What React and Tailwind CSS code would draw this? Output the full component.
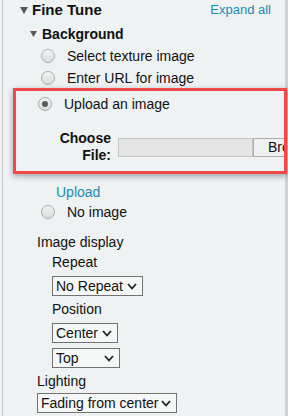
import React from "react";

function Radio({ checked }) {
  return (
    <span className="w-[14px] h-[14px] rounded-full border border-[#acacac] bg-linear-to-b from-[#f3f3f3] to-[#dadada] flex items-center justify-center shrink-0">
      {checked && <span className="w-[6px] h-[6px] rounded-full bg-[#5a5a5a]" />}
    </span>
  );
}

function Chevron() {
  return (
    <svg width="10" height="7" viewBox="0 0 10 7" className="shrink-0">
      <polyline points="1,1 5,5.5 9,1" fill="none" stroke="#222" strokeWidth="1.8" />
    </svg>
  );
}

function Select({ label, className }) {
  return (
    <div className={"h-[20px] border border-[#737373] bg-[#f6f8f8] flex items-center justify-between pl-[3px] pr-[5px] text-[14px] text-[#111] " + className}>
      <span>{label}</span>
      <Chevron />
    </div>
  );
}

function Triangle({ big }) {
  return big ? (
    <svg width="8" height="7" viewBox="0 0 8 7"><polygon points="0,0 8,0 4,7" fill="#595959" /></svg>
  ) : (
    <svg width="7" height="6" viewBox="0 0 7 6"><polygon points="0,0 7,0 3.5,6" fill="#595959" /></svg>
  );
}

function RadioRow({ label, checked, className = "" }) {
  return (
    <div className={"h-[20px] flex items-center " + className}>
      <Radio checked={checked} />
      <span className="ml-[12px] text-[14px] text-[#111]">{label}</span>
    </div>
  );
}

export default function App() {
  return (
    <div className="w-[288px] h-[416px] overflow-hidden bg-[#eef2f3] pl-[2px] font-['Liberation_Sans',Arial,sans-serif]">
      <div className="h-full border-l border-[#c4c8c9] border-r-[3px] border-r-[#cdd1d2]">
        {/* header */}
        <div className="h-[20px] flex items-center pl-[17px] pr-[14px]">
          <Triangle big />
          <span className="ml-[4px] text-[15px] font-bold text-[#111]">Fine Tune</span>
          <span className="ml-auto text-[13px] text-[#1b8ab3]">Expand all</span>
        </div>

        <div className="mt-[2px] h-[24px] flex items-center pl-[27px]">
          <Triangle />
          <span className="ml-[5px] text-[14px] font-bold text-[#111]">Background</span>
        </div>

        <div className="pl-[38px]">
          <RadioRow label="Select texture image" />
          <RadioRow label="Enter URL for image" className="mt-[2px]" />
        </div>

        {/* highlighted upload block */}
        <div className="relative z-10 ml-[10px] w-[274px] h-[86px] border-[3px] border-[#f14848] shadow-[0_2px_6px_rgba(0,0,0,0.35)] overflow-hidden pt-[3px]">
          <RadioRow label="Upload an image" checked className="pl-[22px]" />
          <div className="mt-[16px] flex items-center">
            <div className="w-[102px] shrink-0 pr-[7px] text-right text-[14px] leading-[17px] font-bold text-[#111]">
              Choose
              <br />
              File:
            </div>
            <div className="w-[135px] h-[19px] bg-[#e4e4e4] border border-[#c6c6c6] shrink-0" />
            <div className="h-[19px] w-[80px] shrink-0 bg-[#f0f0f0] border border-[#adadad] pl-[14px] text-[14px] leading-[17px] text-[#111] whitespace-nowrap">
              Browse...
            </div>
          </div>
        </div>

        <div className="mt-[8px] h-[20px] flex items-center pl-[53px] text-[14px] text-[#1b8ab3]">Upload</div>
        <div className="pl-[38px]">
          <RadioRow label="No image" />
        </div>

        <div className="mt-[10px] h-[20px] flex items-center pl-[34px] text-[14px] text-[#111]">Image display</div>
        <div className="h-[20px] flex items-center pl-[49px] text-[14px] text-[#111]">Repeat</div>
        <div className="pl-[49px] mt-[4px]">
          <Select label="No Repeat" className="w-[91px]" />
        </div>
        <div className="mt-[3px] h-[20px] flex items-center pl-[49px] text-[14px] text-[#111]">Position</div>
        <div className="pl-[49px] mt-[4px]">
          <Select label="Center" className="w-[66px]" />
        </div>
        <div className="pl-[49px] mt-[5px]">
          <Select label="Top" className="w-[68px]" />
        </div>
        <div className="mt-[3px] h-[20px] flex items-center pl-[34px] text-[14px] text-[#111]">Lighting</div>
        <div className="pl-[34px] mt-[2px]">
          <Select label="Fading from center" className="w-[140px]" />
        </div>
      </div>
    </div>
  );
}
